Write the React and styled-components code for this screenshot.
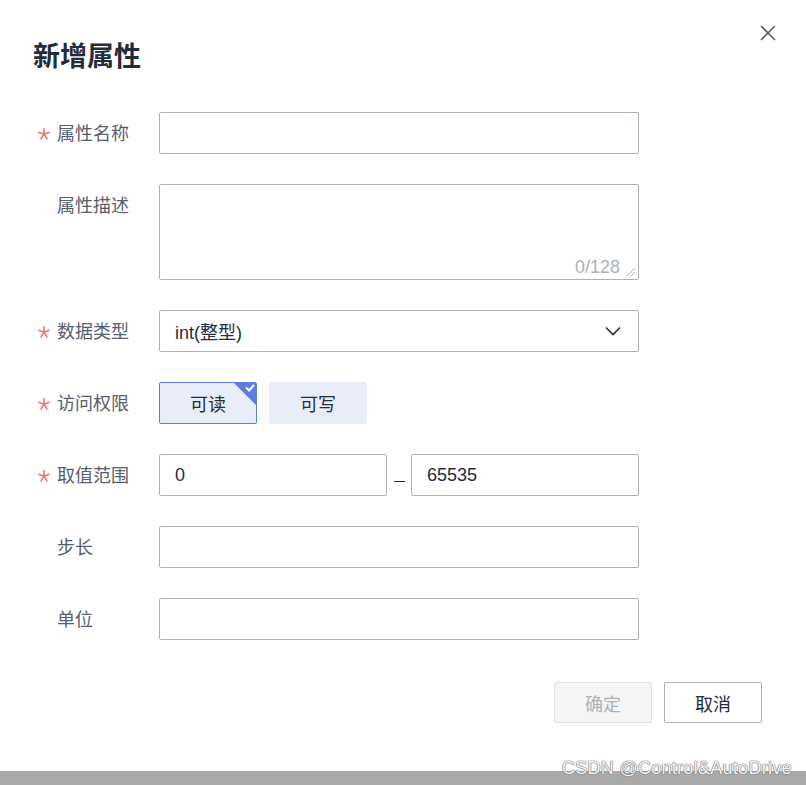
import React from "react";
import styled, { createGlobalStyle } from "styled-components";

const Global = createGlobalStyle`
  html, body { margin: 0; padding: 0; background: #fff; }
  body { font-family: "Liberation Sans", "Noto Sans CJK SC", sans-serif; }
  * { box-sizing: border-box; }
`;

const Page = styled.div`
  position: relative;
  width: 806px;
  height: 785px;
  display: flex;
  flex-direction: column;
  overflow: hidden;
  background: #fff;
`;

const Dialog = styled.div`
  position: relative;
  flex: 1;
  padding: 40px 44px 0 33px;
`;

const Title = styled.h1`
  margin: 0;
  font-size: 27px;
  line-height: 34px;
  font-weight: 700;
  color: #252b3a;
`;

const Close = styled.button`
  position: absolute;
  top: 25px;
  right: 30px;
  width: 16px;
  height: 16px;
  padding: 0;
  border: 0;
  background: none;
  display: flex;
  align-items: center;
  justify-content: center;
`;

const Form = styled.div`
  margin-top: 38px;
  display: grid;
  grid-template-columns: 126px 480px;
  row-gap: 30px;
`;

const Label = styled.div`
  height: 42px;
  display: flex;
  align-items: center;
  padding-left: 5px;
  padding-bottom: 3px;
  gap: 7px;
  font-size: 18px;
  color: #575d6c;
  align-self: start;
`;

const StarSlot = styled.span`
  width: 12px;
  height: 12px;
  display: flex;
  margin-top: 4px;
`;

const Input = styled.div`
  height: 42px;
  width: ${(p) => p.$w || "480px"};
  border: 1px solid #adb0b8;
  border-radius: 2px;
  padding: 0 15px;
  display: flex;
  align-items: center;
  font-size: 18px;
  color: #252b3a;
  background: #fff;
`;

const Select = styled(Input)`
  justify-content: space-between;
  padding-right: 17px;
`;

const TextArea = styled.div`
  position: relative;
  height: 96px;
  width: 480px;
  border: 1px solid #adb0b8;
  border-radius: 2px;
  background: #fff;
  display: flex;
  align-items: flex-end;
  justify-content: flex-end;
  padding: 0 18px 0 0;
`;

const Counter = styled.span`
  font-size: 18px;
  line-height: 24px;
  color: #adb0b8;
`;

const Grip = styled.svg`
  position: absolute;
  right: 2px;
  bottom: 2px;
`;

const ToggleGroup = styled.div`
  display: flex;
  gap: 12px;
`;

const Toggle = styled.div`
  position: relative;
  width: 98px;
  height: 42px;
  border-radius: 2px;
  background: #e9edfa;
  border: 1px solid ${(p) => (p.$active ? "#5e7ce0" : "#e9edfa")};
  display: flex;
  align-items: center;
  justify-content: center;
  font-size: 18px;
  color: #252b3a;
  overflow: hidden;
`;

const Corner = styled.svg`
  position: absolute;
  top: -1px;
  right: -1px;
`;

const Range = styled.div`
  display: flex;
  align-items: center;
`;

const Dash = styled.div`
  width: 24px;
  display: flex;
  justify-content: center;
  padding-top: 12px;
  &::before {
    content: "";
    width: 11px;
    height: 1px;
    background: #252b3a;
  }
`;

const Footer = styled.div`
  margin-top: 42px;
  display: flex;
  justify-content: flex-end;
  gap: 12px;
`;

const Button = styled.button`
  width: 98px;
  height: 41px;
  border-radius: 2px;
  font-family: inherit;
  font-size: 18px;
  border: 1px solid ${(p) => (p.$disabled ? "#dfe1e6" : "#adb0b8")};
  background: ${(p) => (p.$disabled ? "#f5f5f6" : "#fff")};
  color: ${(p) => (p.$disabled ? "#adb0b8" : "#252b3a")};
`;

const Bar = styled.div`
  height: 14px;
  background: #a9a9a9;
`;

const Watermark = styled.div`
  position: absolute;
  left: 562px;
  bottom: 6px;
  font-size: 18px;
  letter-spacing: 0.28px;
  color: #f4f4f4;
  text-shadow: 0 0 1px #6b6b6b, 0 0 1px #6b6b6b, 0 0 1px #6b6b6b;
`;

const Star = () => (
  <StarSlot>
    <svg width="12" height="12" viewBox="0 0 12 12">
      <g stroke="#f66f6a" strokeWidth="1.6" strokeLinecap="round" fill="none">
        <line x1="6" y1="6" x2="6" y2="0.8" />
        <line x1="6" y1="6" x2="1" y2="4.4" />
        <line x1="6" y1="6" x2="11" y2="4.4" />
        <line x1="6" y1="6" x2="3" y2="10.8" />
        <line x1="6" y1="6" x2="9" y2="10.8" />
      </g>
    </svg>
  </StarSlot>
);

const Blank = styled.span`
  width: 12px;
`;

const FieldLabel = ({ req, children }) => (
  <Label>
    {req ? <Star /> : <Blank />}
    {children}
  </Label>
);

export default function App() {
  return (
    <>
      <Global />
      <Page>
        <Dialog>
          <Title>新增属性</Title>
          <Close aria-label="close">
            <svg width="16" height="16" viewBox="0 0 16 16">
              <path d="M1 1 L15 15 M15 1 L1 15" stroke="#575d6c" strokeWidth="1.6" />
            </svg>
          </Close>
          <Form>
            <FieldLabel req>属性名称</FieldLabel>
            <Input />

            <FieldLabel>属性描述</FieldLabel>
            <TextArea>
              <Counter>0/128</Counter>
              <Grip width="12" height="12" viewBox="0 0 12 12">
                <path d="M11 3 L3 11 M11 7 L7 11" stroke="#adb0b8" strokeWidth="1" />
              </Grip>
            </TextArea>

            <FieldLabel req>数据类型</FieldLabel>
            <Select>
              <span>int(整型)</span>
              <svg width="16" height="10" viewBox="0 0 16 10">
                <path d="M1 1.5 L8 8.5 L15 1.5" stroke="#252b3a" strokeWidth="1.6" fill="none" />
              </svg>
            </Select>

            <FieldLabel req>访问权限</FieldLabel>
            <ToggleGroup>
              <Toggle $active>
                可读
                <Corner width="24" height="24" viewBox="0 0 24 24">
                  <path d="M0 0 H24 V24 Z" fill="#5e7ce0" />
                  <path d="M13 5.5 L16 8.5 L21 3" stroke="#fff" strokeWidth="2" fill="none" />
                </Corner>
              </Toggle>
              <Toggle>可写</Toggle>
            </ToggleGroup>

            <FieldLabel req>取值范围</FieldLabel>
            <Range>
              <Input $w="228px">0</Input>
              <Dash />
              <Input $w="228px">65535</Input>
            </Range>

            <FieldLabel>步长</FieldLabel>
            <Input />

            <FieldLabel>单位</FieldLabel>
            <Input />
          </Form>
          <Footer>
            <Button $disabled>确定</Button>
            <Button>取消</Button>
          </Footer>
        </Dialog>
        <Bar />
        <Watermark>CSDN @Control&amp;AutoDrive</Watermark>
      </Page>
    </>
  );
}
